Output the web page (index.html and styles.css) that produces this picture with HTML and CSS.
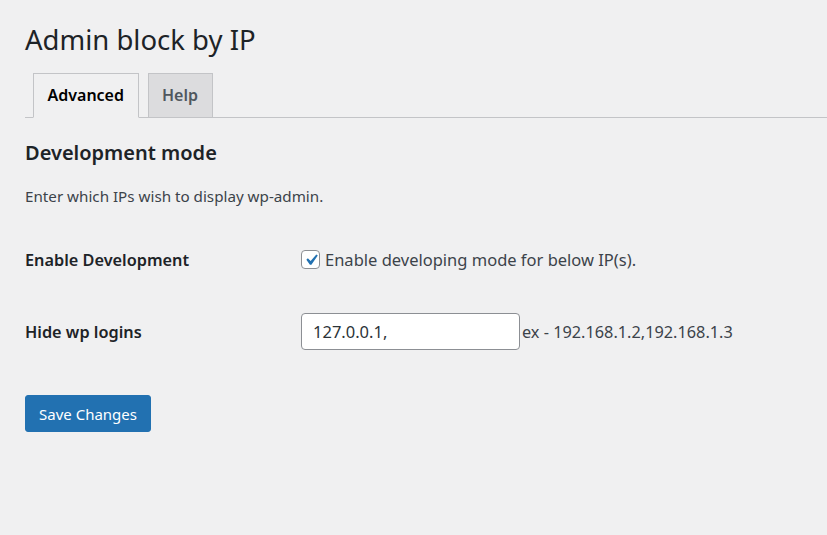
FILE: index.html
```html
<!DOCTYPE html>
<html>
<head>
<meta charset="utf-8">
<link rel="stylesheet" href="styles.css">
</head>
<body>
<div class="wrap">
  <h1 class="page-title">Admin block by IP</h1>
  <nav class="tabs">
    <a class="tab active">Advanced</a>
    <a class="tab">Help</a>
  </nav>
  <h2 class="section-title">Development mode</h2>
  <p class="desc">Enter which IPs wish to display wp-admin.</p>
  <div class="form">
    <div class="row row-check">
      <div class="label">Enable Development</div>
      <div class="field">
        <span class="checkbox"><svg viewBox="0 0 20 20" width="20" height="20"><path d="M14.83 4.89l1.34.94-5.81 8.38H9.02L5.78 9.67l1.34-1.25 2.57 2.4z" fill="#2271b1"/></svg></span>
        <span class="check-text">Enable developing mode for below IP(s).</span>
      </div>
    </div>
    <div class="row row-input">
      <div class="label">Hide wp logins</div>
      <div class="field">
        <input class="text-input" type="text" value="127.0.0.1,">
        <span class="hint">ex - 192.168.1.2,192.168.1.3</span>
      </div>
    </div>
  </div>
  <button class="btn">Save Changes</button>
</div>
</body>
</html>
```
FILE: styles.css
```css
html, body {
  margin: 0;
  padding: 0;
  background: #f0f0f1;
}
body {
  font-family: "Noto Sans", "Open Sans", sans-serif;
  color: #1d2327;
  width: 827px;
  height: 535px;
  overflow: hidden;
}
.wrap {
  padding: 20px 0 0 25px;
}
.page-title {
  margin: 0;
  font-size: 27.5px;
  font-weight: 400;
  line-height: 40px;
  color: #1d2327;
}
.tabs {
  margin-top: 13px;
  display: flex;
  gap: 9px;
  padding-left: 8px;
  border-bottom: 1px solid #c3c4c7;
  height: 44px;
  align-items: flex-end;
}
.tab {
  box-sizing: border-box;
  height: 45px;
  margin-bottom: -1px;
  border: 1px solid #c3c4c7;
  background: #dcdcde;
  color: #50575e;
  font-size: 16px;
  font-weight: 600;
  line-height: 43px;
  padding: 0 13.5px;
}
.tab.active {
  background: #f0f0f1;
  border-bottom-color: #f0f0f1;
  color: #000;
}
.section-title {
  margin: 22px 0 0;
  font-size: 20px;
  font-weight: 600;
  line-height: 26px;
}
.desc {
  margin: 20px 0 0;
  font-size: 15.2px;
  line-height: 20px;
  color: #3c434a;
}
.form {
  margin-top: 42px;
}
.row {
  display: flex;
  align-items: center;
}
.label {
  width: 276px;
  font-size: 16.3px;
  font-weight: 600;
}
.field {
  display: flex;
  align-items: center;
  font-size: 16.5px;
  color: #3c434a;
}
.row-input {
  margin-top: 42px;
}
.checkbox {
  box-sizing: border-box;
  width: 19px;
  height: 19px;
  border: 1px solid #8c8f94;
  border-radius: 4px;
  background: #fff;
  display: flex;
  align-items: center;
  justify-content: center;
  margin-right: 5px;
}
.checkbox svg {
  width: 22px;
  height: 22px;
  flex: none;
}
.text-input {
  box-sizing: border-box;
  width: 219px;
  height: 37px;
  border: 1px solid #8c8f94;
  border-radius: 4px;
  background: #fff;
  padding: 0 11px;
  font-family: inherit;
  font-size: 16.5px;
  color: #2c3338;
  margin: 0 2px 0 0;
}
.hint {
  font-size: 16.3px;
}
.btn {
  margin-top: 45px;
  box-sizing: border-box;
  width: 126px;
  height: 37px;
  background: #2271b1;
  border: 1px solid #2271b1;
  border-radius: 3px;
  color: #fff;
  font-family: inherit;
  font-size: 15px;
  padding: 0;
}
```
